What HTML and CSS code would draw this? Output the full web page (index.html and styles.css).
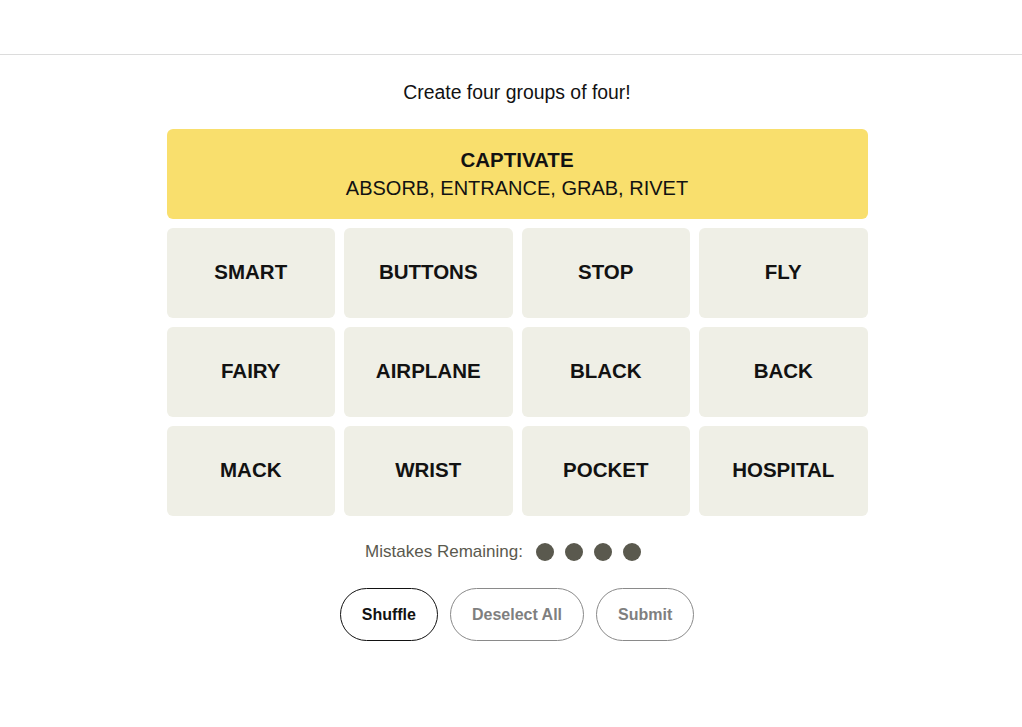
FILE: index.html
```html
<!DOCTYPE html>
<html lang="en">
<head>
<meta charset="utf-8">
<title>Connections</title>
<link rel="stylesheet" href="styles.css">
</head>
<body>
<header class="topbar"></header>
<main class="game">
  <p class="prompt">Create four groups of four!</p>
  <div class="board">
    <div class="solved yellow">
      <div class="solved-title">CAPTIVATE</div>
      <div class="solved-words">ABSORB, ENTRANCE, GRAB, RIVET</div>
    </div>
    <div class="tile">SMART</div>
    <div class="tile">BUTTONS</div>
    <div class="tile">STOP</div>
    <div class="tile">FLY</div>
    <div class="tile">FAIRY</div>
    <div class="tile">AIRPLANE</div>
    <div class="tile">BLACK</div>
    <div class="tile">BACK</div>
    <div class="tile">MACK</div>
    <div class="tile">WRIST</div>
    <div class="tile">POCKET</div>
    <div class="tile">HOSPITAL</div>
  </div>
  <div class="mistakes">
    <span class="mistakes-label">Mistakes Remaining:</span>
    <span class="dots"><span class="dot"></span><span class="dot"></span><span class="dot"></span><span class="dot"></span></span>
  </div>
  <div class="actions">
    <button class="btn active">Shuffle</button>
    <button class="btn">Deselect All</button>
    <button class="btn">Submit</button>
  </div>
</main>
</body>
</html>
```

FILE: styles.css
```css
html, body {
  margin: 0;
  padding: 0;
  background: #ffffff;
  font-family: "Liberation Sans", Arial, sans-serif;
  color: #121212;
}

.topbar {
  height: 54px;
  border-bottom: 1px solid #dcdcdc;
}

.game {
  display: flex;
  flex-direction: column;
  align-items: center;
  padding-top: 25px;
  padding-left: 12px;
}

.prompt {
  margin: 0;
  font-size: 19.4px;
  line-height: 24px;
  color: #121212;
}

.board {
  margin-top: 25px;
  width: 701px;
  display: grid;
  grid-template-columns: repeat(4, 1fr);
  grid-auto-rows: 90px;
  gap: 9px;
}

.solved {
  grid-column: 1 / -1;
  border-radius: 6px;
  display: flex;
  flex-direction: column;
  align-items: center;
  justify-content: center;
  font-size: 20px;
  line-height: 28px;
}

.yellow {
  background: #f9df6d;
}

.solved-title {
  font-weight: 700;
  font-size: 20.5px;
}

.solved-words {
  font-weight: 400;
}

.tile {
  background: #efefe6;
  border-radius: 6px;
  display: flex;
  align-items: center;
  justify-content: center;
  padding-bottom: 2px;
  font-size: 20.5px;
  font-weight: 700;
  color: #121212;
}

.mistakes {
  margin-top: 24px;
  height: 24px;
  display: flex;
  align-items: center;
  gap: 13px;
  padding-right: 28px;
  font-size: 17px;
  color: #5a594e;
}

.dots {
  display: flex;
  gap: 11px;
}

.dot {
  width: 18px;
  height: 18px;
  border-radius: 50%;
  background: #5a594e;
}

.actions {
  margin-top: 24px;
  display: flex;
  gap: 12px;
}

.btn {
  height: 53px;
  padding: 0 21px;
  border: 1px solid #8a8a8a;
  border-radius: 27px;
  background: #ffffff;
  font-family: "Liberation Sans", Arial, sans-serif;
  font-size: 16px;
  font-weight: 700;
  color: #7f7f7f;
}

.btn.active {
  border-color: #121212;
  color: #121212;
}
```
